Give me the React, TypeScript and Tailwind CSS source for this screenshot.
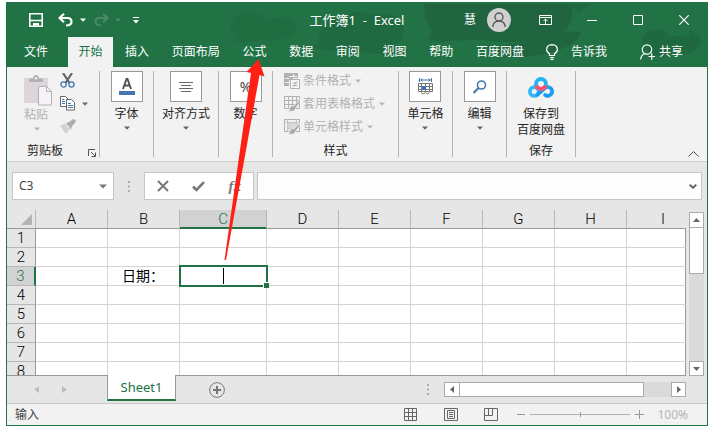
import { useState } from "react";
import type { ReactNode } from "react";

const tabs = ["插入", "页面布局", "公式", "数据", "审阅", "视图", "帮助", "百度网盘"];
const columns = ["A", "B", "C", "D", "E", "F", "G", "H"];
const rows = [1, 2, 3, 4, 5, 6, 7, 8];

function Caret({ className = "text-[#666]" }: { className?: string }) {
  return (
    <svg width="6" height="4" viewBox="0 0 6 4" className={className} aria-hidden="true">
      <path d="M0 0.5h6L3 3.7z" fill="currentColor" />
    </svg>
  );
}

function Backdrop() {
  return (
    <svg className="absolute right-0 top-0 h-full" width="480" height="65" viewBox="227 2 480 65" aria-hidden="true">
      <g fill="#20653f">
        <path d="M240 11q-14 6-13 18l6 6-2 6q16 2 28-1 30 0 34-10 2-12-14-14l-14 3q-10-10-25-8z" opacity=".45" />
        <path d="M317 38q-2-14 18-20 20-12 34-4 30-4 34 12 2 18-16 18 16 8 28 6-30 8-66 0-28 2-44-4 14-2 12-8z" opacity=".65" />
        <path d="M424 3h150q2 22-12 30-14 8-36 8-20 2-46-2l-40 2-14-3q8-6 2-14-6-10-4-21z" />
        <path d="M484 45q30 2 60-9 20-6 39-5-2 10-18 17-30 12-62 8z" />
        <path d="M573 3h20l-13 9z" opacity=".7" />
        <path d="M645 44q0-14 14-15 10 0 14 8 6-4 14 0 8-2 6-8l10 6q4 8-4 14-10 8-24 6-20 6-30-11z" opacity=".7" />
      </g>
    </svg>
  );
}

function TitleBar() {
  return (
    <div className="relative grid h-[34px] grid-cols-[1fr_auto_1fr] items-center text-white">
      <div className="flex items-center pl-[22px]">
        <button aria-label="保存">
          <svg width="14" height="14" viewBox="0 0 14 14" fill="none" stroke="currentColor">
            <path d="M.8.8h12.4v12.4H.8zM1 7.5h12" strokeWidth="1.6" />
            <path d="M4 10h6v4H8.500v-2H7v2H4z" fill="currentColor" stroke="none" />
          </svg>
        </button>
        <button aria-label="撤消" className="ml-[15px] flex items-center gap-[7px]">
          <svg width="15" height="14" viewBox="0 0 15 14" fill="none" stroke="currentColor" strokeWidth="2.200">
            <path d="M6 .8 1.500 5 6 9.200M2 5h7.500q4 0 4 3.700 0 3.500-5.500 3.800" />
          </svg>
          <Caret className="text-white" />
        </button>
        <button aria-label="恢复" disabled className="ml-2 flex items-center gap-[6px] text-[#4b8a66]">
          <svg width="15" height="14" viewBox="0 0 15 14" fill="none" stroke="currentColor" strokeWidth="2">
            <path d="M9 .8 13.500 5 9 9.200M13 5H5.500q-4 0-4 3.700 0 3.500 5.500 3.800" />
          </svg>
          <Caret className="text-[#4b8a66]" />
        </button>
        <button aria-label="自定义快速访问工具栏" className="ml-3">
          <svg width="6" height="8" viewBox="0 0 6 8" fill="currentColor">
            <path d="M0 1h6v1H0zM0 4h6L3 7.500z" />
          </svg>
        </button>
      </div>
      <h1 className="whitespace-pre text-[13px] leading-4">工作簿1  -  Excel</h1>
      <div className="flex items-center justify-end pr-[18px]">
        <span className="text-xs leading-4">慧</span>
        <svg className="ml-[11px]" width="24" height="24" viewBox="0 0 24 24" aria-hidden="true">
          <circle cx="12" cy="12" r="12" fill="#d0d0d0" />
          <g fill="none" stroke="#555" strokeWidth="1.300">
            <circle cx="12" cy="9" r="4" />
            <path d="M5.800 19q.4-6 6.200-6t6.200 6" />
          </g>
        </svg>
        <button aria-label="功能区显示选项" className="ml-7">
          <svg width="13" height="10" viewBox="0 0 13 10" fill="none" stroke="currentColor">
            <path d="M.5.5h12v9H.5zM.5 2.500h12M6.500 9V4M4.500 6l2-2 2 2" />
          </svg>
        </button>
        <button aria-label="最小化" className="ml-[35px]">
          <svg width="10" height="10" viewBox="0 0 10 10" stroke="currentColor"><path d="M0 5.500h10" /></svg>
        </button>
        <button aria-label="最大化" className="ml-9">
          <svg width="10" height="10" viewBox="0 0 10 10" fill="none" stroke="currentColor"><path d="M.5.5h9v9h-9z" /></svg>
        </button>
        <button aria-label="关闭" className="ml-9">
          <svg width="10" height="10" viewBox="0 0 10 10" stroke="currentColor" strokeWidth="1.200"><path d="m.3.3 9.400 9.400M9.700.3.300 9.700" /></svg>
        </button>
      </div>
    </div>
  );
}

function TabStrip() {
  return (
    <nav className="relative flex h-[30px] items-stretch text-xs leading-4 text-white">
      <button className="ml-[6px] px-[11px]">文件</button>
      <button className="ml-[9px] w-[45px] bg-[#f2f2f2] text-[#217346]">开始</button>
      <div className="ml-3 flex w-[399px] justify-between">
        {tabs.map((t) => (
          <button key={t}>{t}</button>
        ))}
      </div>
      <button className="ml-[22px] flex items-center gap-[13px]">
        <svg width="12" height="16" viewBox="0 0 12 16" fill="none" stroke="currentColor" strokeWidth="1.200">
          <path d="M3.500 11.500V9.700Q.6 8 .6 5.300.8.8 6 .6q5.200.2 5.400 4.700 0 2.700-2.900 4.400v1.800zM4 13.500h4M4.500 15.400h3" />
        </svg>
        告诉我
      </button>
      <button className="ml-auto mr-6 flex items-center gap-1">
        <svg width="15" height="16" viewBox="0 0 15 16" fill="none" stroke="currentColor" strokeWidth="1.200">
          <circle cx="7" cy="5.500" r="4.700" />
          <path d="M.6 15.500q.2-4 4-6M8.500 12.500H15M11.700 9.300v6.500" />
        </svg>
        共享
      </button>
    </nav>
  );
}

function Group({ className, children }: { className: string; children: ReactNode }) {
  return <section className={`${className} flex shrink-0 flex-col items-center border-r border-[#b4b4b4]`}>{children}</section>;
}

function BigButton({ label, wide, children }: { label: string; wide?: boolean; children: ReactNode }) {
  return (
    <Group className={wide ? "w-[65px]" : "w-[54px]"}>
      <button className="flex flex-col items-center text-xs leading-4">
        <span className="flex h-[31px] w-8 items-center justify-center border border-[#999] bg-white">{children}</span>
        <span className="mt-1 whitespace-nowrap">{label}</span>
        <span className="mt-1"><Caret /></span>
      </button>
    </Group>
  );
}

function StyleIcon({ kind }: { kind: number }) {
  return (
    <svg width="16" height="16" viewBox="0 0 16 16" fill="none" stroke="#b3b0b3" aria-hidden="true">
      {kind === 0 ? (
        <>
          <path d="M0 0h14v5H9v2H5v6H0z" fill="#b3b0b3" stroke="none" />
          <path d="M5 3.500h8M1 5.500h4M1 9.500h4M9.500 1v3" stroke="#f2f2f2" />
          <path d="M6.500 6.500h9v9h-9z" fill="#f8f6f8" />
          <path d="M8.500 10h5M8.500 12.500h5M12.500 8.500l-3 5.500" />
        </>
      ) : (
        <>
          <path d="M.5.5h15v12H.5z" />
          {kind === 1 ? <path d="M0 4.500h15M0 8.500h15M4.500 0v12M8.500 0v12M12.500 0v8" /> : <path d="M4 4h9v6H4z" fill="#dcd8dc" stroke="#c8c5c8" />}
          {kind === 2 && <path d="M3.500 0v12M0 3.500h15M12.500 0v5" stroke="#c8c5c8" />}
          <path d="M16 3.500 10 10 7 9.800 4.500 15.500 10 15l2-3.500 4-5z" fill="#aaa7aa" stroke="#f2f2f2" strokeWidth=".7" />
        </>
      )}
    </svg>
  );
}

function Ribbon() {
  return (
    <div className="flex border-b border-[#d0d0d0] bg-[#f2f2f2] py-1 text-[#262626]">
      <section className="flex h-[86px] w-[93px] shrink-0 flex-col border-r border-[#b4b4b4] pl-[17px]">
        <div className="flex h-[74px] gap-2 pt-0.5">
          <button disabled className="flex w-7 flex-col items-start pt-0.5 text-xs leading-4 text-[#b1b1b1]">
            <svg width="28" height="31" viewBox="0 0 28 31" aria-hidden="true">
              <path d="M0 3h24v25H0z" fill="#dcd6db" />
              <path d="M5 7V3.500h4Q9 0 12 0t3 3.500h4V7z" fill="#b3b0b3" />
              <circle cx="12" cy="3.200" r="1.200" fill="#f2f2f2" />
              <path d="M14.500 11.500h8l5 5v13.500h-13z" fill="#f7f2f8" stroke="#b3b0b3" />
              <path d="M22.500 11.500v5h5" fill="none" stroke="#b3b0b3" />
            </svg>
            <span className="mt-px">粘贴</span>
            <span className="ml-[10px] mt-1"><Caret className="text-[#b8b8b8]" /></span>
          </button>
          <div className="flex flex-col gap-2">
            <button aria-label="剪切">
              <svg width="15" height="15" viewBox="0 0 15 15" fill="none">
                <path d="m3 0 6.500 10M12 0 5.500 10" stroke="#666" strokeWidth="2.200" />
                <circle cx="3.500" cy="11.500" r="2.600" stroke="#4478b0" strokeWidth="1.300" />
                <circle cx="11.500" cy="11.500" r="2.600" stroke="#4478b0" strokeWidth="1.300" />
              </svg>
            </button>
            <button aria-label="复制" className="flex items-center gap-[7px]">
              <svg width="15" height="15" viewBox="0 0 15 15" fill="#fff" stroke="#666">
                <path d="M.5.500h5l3 3v7h-8z" />
                <path d="M6.500 3.500h5l3 3v7.500h-8z" />
                <path d="M2 3.500h2.500M2 5.500h3M2 7.500h3M8 7.500h3M8 9.500h5M8 11.500h5" stroke="#4478b0" />
              </svg>
              <Caret />
            </button>
            <button aria-label="格式刷" disabled>
              <svg width="16" height="15" viewBox="0 0 16 15">
                <path d="m0 7 5-3 5 6-4 5z" fill="#d5d0d5" />
                <path d="m6 4 3-1 4-3 3 1-1 3-3 3-1 4z" fill="#b0adb0" />
                <path d="m5 4 6 7" stroke="#f2f2f2" />
              </svg>
            </button>
          </div>
        </div>
        <div className="flex items-center pl-[3px] text-xs leading-3">
          剪贴板
          <button aria-label="剪贴板设置" className="ml-[25px] mt-1">
            <svg width="8" height="8" viewBox="0 0 8 8" fill="none" stroke="#555"><path d="M.5 7V.5H7M3 3l4 4M7.500 3.500v4h-4" /></svg>
          </button>
        </div>
      </section>
      <BigButton label="字体">
        <svg width="16" height="18" viewBox="0 0 16 18" aria-hidden="true">
          <path d="M4 11 7.500 1h1L12 11M5.500 7.500h5" fill="none" stroke="#505050" strokeWidth="1.900" />
          <path d="M0 13h16v4H0z" fill="#4478b0" />
        </svg>
      </BigButton>
      <BigButton label="对齐方式" wide>
        <svg width="14" height="12" viewBox="0 0 14 12" stroke="#666"><path d="M0 1.500h14M2 4.500h10M0 7.500h14M2 10.500h10" /></svg>
      </BigButton>
      <BigButton label="数字">
        <span className="text-sm leading-4 text-[#444]">%</span>
      </BigButton>
      <Group className="w-[126px]">
        <div className="flex h-[74px] w-full flex-col gap-[7px] pl-[11px] pt-0.5">
          {["条件格式", "套用表格格式", "单元格样式"].map((t, i) => (
            <button key={t} disabled className="flex items-center gap-[3px] whitespace-nowrap text-xs leading-4 text-[#b1b1b1]">
              <StyleIcon kind={i} />
              {t}
              <Caret className="ml-px text-[#b8b8b8]" />
            </button>
          ))}
        </div>
        <span className="text-xs leading-3">样式</span>
      </Group>
      <BigButton label="单元格">
        <svg width="15" height="17" viewBox="0 0 15 17" fill="none" stroke="#777" aria-hidden="true">
          <path d="M.5 5.500v8h14v-8zM0 8.500h15M0 11.500h15M3.500 5v9M7.500 5v9M11.500 5v9M3 14.500q2 3 4.500 0 2 3 4 0" />
          <path d="M4 8h4v4H4z" fill="#3275b8" stroke="none" />
          <path d="M1.500 0v4M13.500 0v4M2 2h11M4.500.5 3 2l1.500 1.500M10.500.5 12 2l-1.500 1.500" stroke="#4478b0" />
        </svg>
      </BigButton>
      <BigButton label="编辑">
        <svg width="16" height="16" viewBox="0 0 16 16" fill="none" stroke="#4478b0" aria-hidden="true">
          <circle cx="9.500" cy="6" r="4" strokeWidth="1.600" />
          <path d="m6.500 9-5 5" strokeWidth="2.200" />
        </svg>
      </BigButton>
      <Group className="w-[69px]">
        <button className="flex h-[74px] flex-col items-center pt-1.5 text-xs leading-4">
          <svg width="26" height="21" viewBox="0 0 26 21" fill="none" strokeWidth="3.800" strokeLinecap="round" aria-hidden="true">
            <circle cx="6.300" cy="14.500" r="4.400" stroke="#35b8f8" />
            <path d="M9.500 17.700 16.500 11.400a4.400 4.400 0 1 1 .6 6.600" stroke="#1a9cf5" />
            <circle cx="13" cy="7" r="5" stroke="#22b4f0" />
            <path d="M8.300 8.500a5 5 0 0 0 9.400 0" stroke="#fa5370" strokeLinecap="butt" />
          </svg>
          <span className="mt-2">保存到</span>
          <span>百度网盘</span>
        </button>
        <span className="text-xs leading-3">保存</span>
      </Group>
      <button aria-label="折叠功能区" className="ml-auto mr-2 self-end">
        <svg width="11" height="6" viewBox="0 0 11 6" fill="none" stroke="#555"><path d="m.5 5.500 5-5 5 5" /></svg>
      </button>
    </div>
  );
}

function Dots() {
  return (
    <svg width="2" height="11" viewBox="0 0 2 11" fill="#adadad" aria-hidden="true"><path d="M0 0h2v2H0zM0 4.500h2v2H0zM0 9h2v2H0z" /></svg>
  );
}

function FormulaBar() {
  return (
    <div className="flex items-center px-[5px] py-[10px]">
      <div className="flex h-7 w-[102px] items-center border border-[#c6c6c6] bg-white pr-1.5">
        <input aria-label="名称框" defaultValue="C3" className="min-w-0 flex-1 pl-[6px] text-xs text-[#444] outline-none" />
        <button aria-label="名称列表">
          <svg width="8" height="5" viewBox="0 0 8 5"><path d="M0 .5h8L4 4.500z" fill="#777" /></svg>
        </button>
      </div>
      <div className="ml-[14px]"><Dots /></div>
      <div className="ml-[14px] flex h-7 w-[110px] items-center justify-between border border-[#c6c6c6] bg-white px-3 text-[#777]">
        <button aria-label="取消">
          <svg width="12" height="12" viewBox="0 0 12 12" fill="none" stroke="currentColor" strokeWidth="2"><path d="m1 1 10 10M11 1 1 11" /></svg>
        </button>
        <button aria-label="确认">
          <svg width="13" height="11" viewBox="0 0 13 11" fill="none" stroke="currentColor" strokeWidth="2.600"><path d="m1 5.500 3.500 3.500L12 1.200" /></svg>
        </button>
        <button aria-label="插入函数" className="font-['Liberation_Serif',serif] text-[15px] font-bold italic leading-4">fx</button>
      </div>
      <div className="ml-[3px] flex h-7 flex-1 items-center border border-[#c6c6c6] bg-[#fdfdfd] pr-1">
        <input aria-label="编辑栏" className="min-w-0 flex-1 px-1 text-xs outline-none" />
        <button aria-label="展开编辑栏">
          <svg width="8" height="5" viewBox="0 0 8 5" fill="none" stroke="#666" strokeWidth="2"><path d="m.7.7 3.300 3 3.300-3" /></svg>
        </button>
      </div>
    </div>
  );
}

function Sheet() {
  const head = "border-b border-[#999] p-0 pt-px font-light leading-[17px]";
  const rule = "border-r border-r-[#b8b8b8]";
  return (
    <div className="flex">
      <div className="h-[166px] min-w-0 flex-1 overflow-hidden border-b border-[#999]">
        <table className="w-full table-fixed border-separate border-spacing-0 font-['Roboto','Noto_Sans_CJK_SC',sans-serif] text-[15px] text-black">
          <colgroup>
            <col className="w-[29px]" />
            {columns.map((c) => (
              <col key={c} className={c === "C" ? "w-[87px]" : "w-[72px]"} />
            ))}
            <col />
          </colgroup>
          <thead>
            <tr className="h-[19px]">
              <th className={`${head} ${rule}`} aria-label="全选">
                <svg className="ml-auto mr-[3px]" width="11" height="11" viewBox="0 0 11 11"><path d="M11 0v11H0z" fill="#b4b4b4" /></svg>
              </th>
              {columns.map((c) =>
                c === "C" ? (
                  <th
                    key={c}
                    className={`border-b border-b-[#217346] bg-[#d2d2d2] p-0 pt-px font-light leading-[17px] text-[#217346] shadow-[inset_0_-1px_0_#217346] ${rule}`}
                  >
                    {c}
                  </th>
                ) : (
                  <th key={c} className={`${head} ${rule}`}>{c}</th>
                )
              )}
              <th className={head}><span className="block w-[72px] text-center">I</span></th>
            </tr>
          </thead>
          <tbody>
            {rows.map((r) => (
              <tr key={r} className="h-[19px]">
                <th
                  className={
                    r === 3
                      ? "border-b border-r-2 border-b-[#b8b8b8] border-r-[#217346] bg-[#d2d2d2] p-0 pt-px font-light leading-[17px] text-[#217346]"
                      : "border-b border-r border-b-[#b8b8b8] border-r-[#999] p-0 pt-px font-light leading-[17px]"
                  }
                >
                  {r}
                </th>
                {columns.map((c) => (
                  <td key={c} className="relative border-b border-r border-[#d4d4d4] bg-white p-0 text-sm leading-[18px]">
                    {r === 3 && c === "B" && <span className="block whitespace-nowrap pl-[14px]">日期：</span>}
                    {r === 3 && c === "C" && (
                      <div className="absolute -bottom-[2px] -left-px -right-[2px] -top-[2px] z-10 flex justify-center border-2 border-[#217346] bg-white py-px">
                        <span className="w-px bg-black" />
                        <span className="absolute -bottom-[3px] -right-[3px] size-[6px] border-l border-t border-white bg-[#217346]" />
                      </div>
                    )}
                  </td>
                ))}
                <td className="border-b border-r border-b-[#d4d4d4] border-r-[#999] bg-white p-0" />
              </tr>
            ))}
          </tbody>
        </table>
      </div>
      <div className="ml-[3px] mr-[3px] mt-[2px] flex w-[15px] flex-col bg-[#dadada]">
        <button aria-label="向上滚动" className="flex h-4 items-center justify-center border border-[#ababab] bg-white">
          <svg width="7" height="4" viewBox="0 0 7 4"><path d="M0 4h7L3.500 0z" fill="#666" /></svg>
        </button>
        <div className="-mt-px h-[47px] border border-[#ababab] bg-white" />
        <button aria-label="向下滚动" className="mt-auto flex h-[15px] items-center justify-center border border-[#ababab] bg-white">
          <svg width="7" height="4" viewBox="0 0 7 4"><path d="M0 0h7L3.500 4z" fill="#666" /></svg>
        </button>
      </div>
    </div>
  );
}

function SheetBar() {
  return (
    <div className="flex h-7 items-center border-b border-[#c6c6c6] pr-[21px]">
      <button aria-label="上一张工作表" className="ml-[27px]">
        <svg width="5" height="7" viewBox="0 0 5 7"><path d="M5 0v7L0 3.500z" fill="#bdbdbd" /></svg>
      </button>
      <button aria-label="下一张工作表" className="ml-[23px]">
        <svg width="5" height="7" viewBox="0 0 5 7"><path d="M0 0v7l5-3.500z" fill="#bdbdbd" /></svg>
      </button>
      <button className="-mt-px ml-[40px] h-[26px] w-[69px] self-start border-x border-b-2 border-x-[#999] border-b-[#217346] bg-white text-[13px] leading-4 text-[#217346]">
        Sheet1
      </button>
      <button aria-label="新工作表" className="ml-[33px]">
        <svg width="16" height="16" viewBox="0 0 16 16" fill="none" stroke="#777"><circle cx="8" cy="8" r="7.400" /><path d="M8 4v8M4 8h8" strokeWidth="2" /></svg>
      </button>
      <div className="ml-auto"><Dots /></div>
      <div className="ml-[15px] flex h-[15px] w-[242px] bg-[#dadada]">
        <button aria-label="向左滚动" className="flex w-4 items-center justify-center border border-[#ababab] bg-white">
          <svg width="4" height="7" viewBox="0 0 4 7"><path d="M4 0v7L0 3.500z" fill="#666" /></svg>
        </button>
        <div className="-ml-px w-[185px] border border-[#ababab] bg-white" />
        <button aria-label="向右滚动" className="ml-auto flex w-[15px] items-center justify-center border border-[#ababab] bg-white">
          <svg width="4" height="7" viewBox="0 0 4 7"><path d="M0 0v7l4-3.500z" fill="#666" /></svg>
        </button>
      </div>
    </div>
  );
}

function StatusBar() {
  const [zoom, setZoom] = useState(50);
  return (
    <footer className="flex h-[21px] items-center bg-[#f2f2f2] pl-2 pr-[19px] text-xs leading-4 text-[#444]">
      <span>输入</span>
      <button aria-label="普通视图" className="ml-auto">
        <svg width="13" height="13" viewBox="0 0 13 13" fill="none" stroke="#666"><path d="M.5.500h12v12H.5zM0 4.500h13M0 8.500h13M4.500 0v13M8.500 0v13" /></svg>
      </button>
      <button aria-label="页面布局视图" className="ml-[27px]">
        <svg width="14" height="13" viewBox="0 0 14 13" fill="none" stroke="#666"><path d="M.5.500h13v12H.5zM3.500 2.500h7v8h-7zM5 4.500h4M5 6.500h4M5 8.500h4" /></svg>
      </button>
      <button aria-label="分页预览" className="ml-[26px]">
        <svg width="14" height="13" viewBox="0 0 14 13" fill="none" stroke="#666"><path d="M.5.500h13v12H.5zM.5 7.500h8v-7M4.500.500v7" /></svg>
      </button>
      <button aria-label="缩小" className="ml-[19px]" onClick={() => setZoom(zoom - 10)}>
        <svg width="8" height="9" viewBox="0 0 8 9" stroke="#999"><path d="M0 4.500h8" /></svg>
      </button>
      <input
        type="range"
        aria-label="显示比例"
        value={zoom}
        onChange={(e) => setZoom(Number(e.target.value))}
        className="ml-[5px] h-[5px] w-[100px] appearance-none bg-transparent [&::-webkit-slider-runnable-track]:h-px [&::-webkit-slider-runnable-track]:bg-[#b0b0b0] [&::-webkit-slider-thumb]:-mt-[2px] [&::-webkit-slider-thumb]:h-[5px] [&::-webkit-slider-thumb]:w-px [&::-webkit-slider-thumb]:appearance-none [&::-webkit-slider-thumb]:bg-[#999]"
      />
      <button aria-label="放大" className="ml-[5px]" onClick={() => setZoom(zoom + 10)}>
        <svg width="9" height="9" viewBox="0 0 9 9" stroke="#999"><path d="M0 4.500h9M4.500 0v9" /></svg>
      </button>
      <span className="ml-[13px] text-[#b5b5b5]">100%</span>
    </footer>
  );
}

export default function App() {
  return (
    <main className="relative bg-white pb-1 pl-1.5 pr-2 pt-0.5 font-['Noto_Sans','Noto_Sans_CJK_SC',sans-serif]">
      <div className="border border-[#217346] bg-[#e6e6e6]">
        <header className="relative bg-[#217346]">
          <Backdrop />
          <TitleBar />
          <TabStrip />
        </header>
        <Ribbon />
        <FormulaBar />
        <Sheet />
        <SheetBar />
        <StatusBar />
      </div>
      <svg className="pointer-events-none absolute left-[224px] top-[58px] z-20" width="42" height="203" viewBox="224 58 42 203" aria-hidden="true">
        <path d="M258.500 59 264.500 76.500 259.500 75 243.500 164 226 260h-1.500L238 164l13-91-4.500-1z" fill="#ff2015" />
      </svg>
    </main>
  );
}
